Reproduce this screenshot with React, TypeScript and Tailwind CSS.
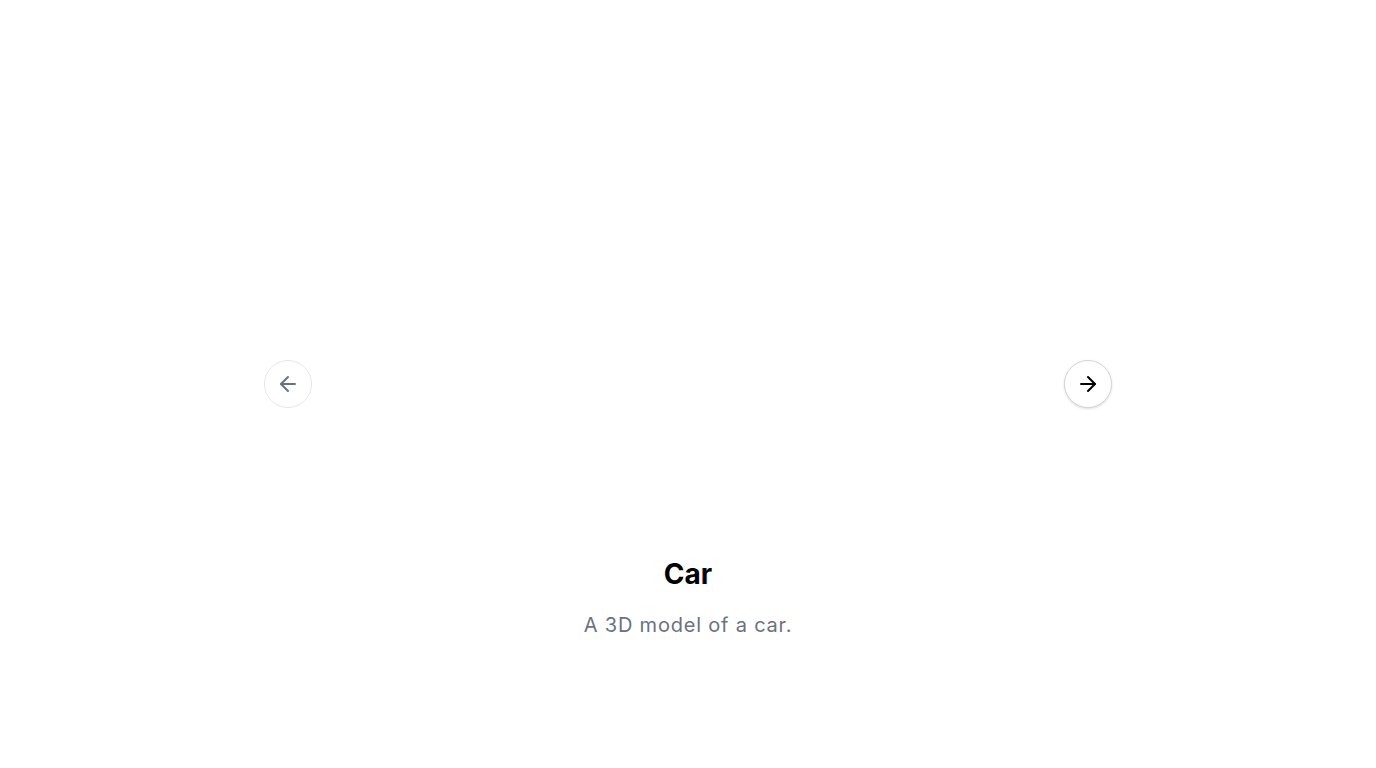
import React, { useState } from 'react';
import { ArrowLeft, ArrowRight } from 'lucide-react';

interface Slide {
  title: string;
  description: string;
}

const slides: Slide[] = [
  { title: 'Car', description: 'A 3D model of a car.' },
  { title: 'Chair', description: 'A 3D model of a chair.' },
  { title: 'Lamp', description: 'A 3D model of a lamp.' },
];

const App: React.FC = () => {
  const [index, setIndex] = useState(0);
  const slide = slides[index];
  const atStart = index === 0;
  const atEnd = index === slides.length - 1;

  return (
    <div
      className="relative w-full h-[768px] bg-white flex flex-col items-center"
      style={{ fontFamily: 'Inter, "Noto Sans", sans-serif' }}
    >
      {/* model viewport */}
      <div className="w-[752px] h-[556px]" />

      <h2 className="text-[28px] leading-9 font-bold text-black">{slide.title}</h2>
      <p className="mt-[19px] text-xl leading-7 tracking-[0.8px] text-gray-500">{slide.description}</p>

      <button
        onClick={() => !atStart && setIndex(index - 1)}
        disabled={atStart}
        className="absolute left-[264px] top-[360px] w-12 h-12 rounded-full border border-gray-200 bg-white flex items-center justify-center text-gray-500"
        aria-label="Previous slide"
      >
        <ArrowLeft size={24} strokeWidth={2} />
      </button>

      <button
        onClick={() => !atEnd && setIndex(index + 1)}
        disabled={atEnd}
        className="absolute left-[1064px] top-[360px] w-12 h-12 rounded-full border border-gray-300 bg-white shadow-sm flex items-center justify-center text-black"
        aria-label="Next slide"
      >
        <ArrowRight size={24} strokeWidth={2} />
      </button>
    </div>
  );
};

export default App;
